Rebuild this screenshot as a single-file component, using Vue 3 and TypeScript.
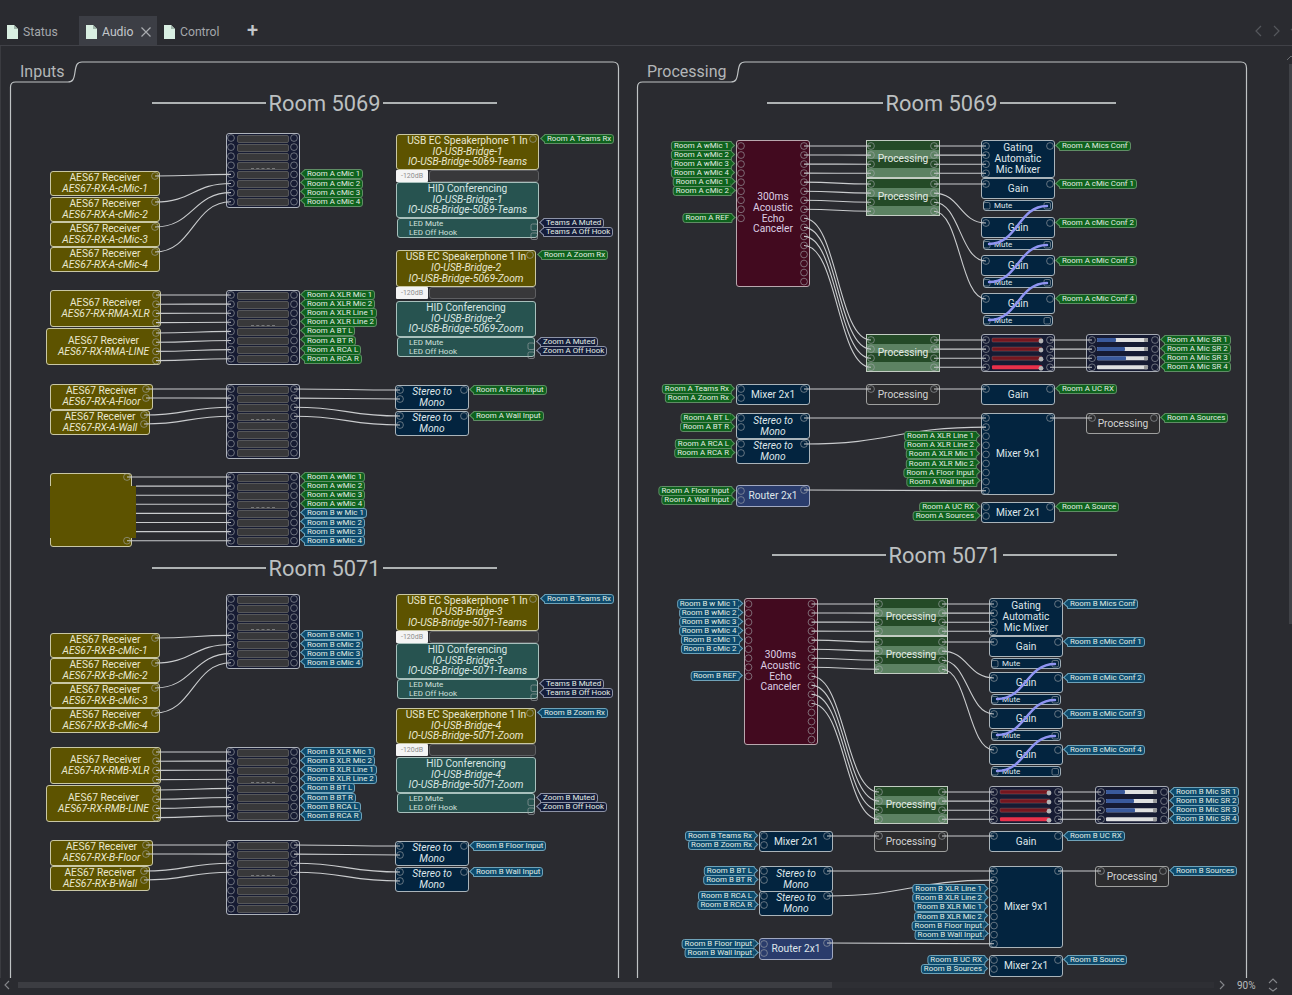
<script setup lang="ts">
type Kind = 'yel' | 'flat' | 'teal' | 'led' | 'navy' | 'aec' | 'rtr' | 'plain' | 'proc' | 'xpt' | 'fader' | 'mute' | 'mval' | 'mbar'
type Color = 'g' | 'b' | 'n'
interface DiagNode { kind: Kind; x: number; y: number; w: number; h: number; lines: { t: string; i: boolean }[] }
interface Lab { x: number; y: number; t: string; out: boolean; c: Color }
interface Wire { d: string; cls: string }
interface Pt { x: number; y: number }
interface Bar { x: number; y: number; w: number; h: number; cls: string }

const nodes: DiagNode[] = []
const labels: Lab[] = []
const wires: Wire[] = []
const ports: Pt[] = []
const squares: Pt[] = []
const bars: Bar[] = []
const knobs: Pt[] = []

const node = (kind: Kind, x: number, y: number, w: number, h: number, lines: string[] = []) => {
  nodes.push({ kind, x, y, w, h, lines: lines.map((l) => ({ t: l.replace(/^~/, ''), i: l.startsWith('~') })) })
}
const port = (x: number, y: number) => { ports.push({ x, y }); return { x, y } }
const wire = (a: Pt, b: Pt, cls = 'wire') => {
  const m = (a.x + b.x) / 2
  wires.push({ d: `M${a.x} ${a.y}C${m} ${a.y} ${m} ${b.y} ${b.x} ${b.y}`, cls })
}
const outLab = (x: number, y: number, t: string, c: Color) => labels.push({ x, y, t, out: true, c })
const inLab = (x: number, y: number, t: string, c: Color) => labels.push({ x, y, t, out: false, c })

function crosspoint(y: number) {
  node('xpt', 226, y, 74, 75)
  const left: Pt[] = []
  const right: Pt[] = []
  for (let i = 0; i < 8; i++) {
    left.push(port(231, y + 5 + 9.1 * i))
    right.push(port(294, y + 5 + 9.1 * i))
  }
  return { left, right }
}
function receiver(x: number, y: number, w: number, h: number, name: string) {
  node('yel', x, y, w, h, ['AES67 Receiver', '~' + name])
}
function usbBlock(y: number, w: number, id: number, room: string, app: string, rx: string, mute: string, hook: string, c: Color, gap: number, h0: number) {
  const bridge = `~IO-USB-Bridge-${id}`
  const full = `~IO-USB-Bridge-${room}-${app}`
  node('yel', 396, y, w, h0, ['USB EC Speakerphone 1 In', bridge, full])
  const m = y + h0
  node('mval', 396, m, 32, 12, ['-120dB'])
  node('mbar', 429, m, w - 33, 12)
  const hid = m + 12 + gap
  node('teal', 396, hid, w, 36, ['HID Conferencing', bridge, full])
  node('led', 397, hid + 36, w - 2, 20, ['LED Mute', 'LED Off Hook'])
  port(396 + w - 6, y + 5)
  outLab(396 + w + 2, y + 5, rx, c)
  squares.push({ x: 396 + w - 8, y: hid + 42 }, { x: 396 + w - 8, y: hid + 51 })
  outLab(396 + w + 1, hid + 41, mute, 'n')
  outLab(396 + w + 1, hid + 50, hook, 'n')
}

function inputsRoom(R: 'A' | 'B', c: Color, num: string, cfg: {
  x1: number; rc: number[]; x2: number; r2: number[]; x3: number; r3: number[]; u: [number, number, number, number]; gaps: [number, number]; hs: [number, number]
}) {
  const rcName = `RX-${R}-cMic`
  const x1 = crosspoint(cfg.x1)
  cfg.rc.forEach((y, i) => {
    receiver(50, y, 110, 25, `AES67-${rcName}-${i + 1}`)
    wire(port(155, y + 5), x1.left[i + 4])
    outLab(301, x1.right[i + 4].y, `Room ${R} cMic ${i + 1}`, c)
  })
  const x2 = crosspoint(cfg.x2)
  const rm = R === 'A' ? 'RMA' : 'RMB'
  receiver(50, cfg.r2[0], 111, 37, `AES67-RX-${rm}-XLR`)
  receiver(46, cfg.r2[1], 115, 37, `AES67-RX-${rm}-LINE`)
  const xlr = ['XLR Mic 1', 'XLR Mic 2', 'XLR Line 1', 'XLR Line 2', 'BT L', 'BT R', 'RCA L', 'RCA R']
  xlr.forEach((t, i) => {
    const top = cfg.r2[i < 4 ? 0 : 1]
    wire(port(156, top + 5 + 9.2 * (i % 4)), x2.left[i])
    outLab(301, x2.right[i].y, `Room ${R} ${t}`, c)
  })
  const x3 = crosspoint(cfg.x3)
  receiver(50, cfg.r3[0], 103, 26, `AES67-RX-${R}-Floor`)
  receiver(50, cfg.r3[1], 100, 25, `AES67-RX-${R}-Wall`)
  for (let i = 0; i < 4; i++) {
    const top = i < 2 ? cfg.r3[0] : cfg.r3[1]
    const px = i < 2 ? 146 : 144
    wire(port(px, top + 5 + 9 * (i % 2)), x3.left[i])
  }
  ;[cfg.r3[0], cfg.r3[1]].forEach((y, s) => {
    node('navy', 395, y + 1, 74, 25, ['~Stereo to', '~Mono'])
    wire(x3.right[s * 2], port(400, y + 6))
    wire(x3.right[s * 2 + 1], port(400, y + 15))
    port(464, y + 6)
    outLab(470, y + 6, `Room ${R} ${s ? 'Wall' : 'Floor'} Input`, c)
  })
  usbBlock(cfg.u[0], 143, R === 'A' ? 1 : 3, num, 'Teams', `Room ${R} Teams Rx`, `Teams ${R} Muted`, `Teams ${R} Off Hook`, c, cfg.gaps[0], cfg.hs[0])
  usbBlock(cfg.u[1], 140, R === 'A' ? 2 : 4, num, 'Zoom', `Room ${R} Zoom Rx`, `Zoom ${R} Muted`, `Zoom ${R} Off Hook`, c, cfg.gaps[1], cfg.hs[1])
}

function processRoom(R: 'A' | 'B', c: Color, cfg: {
  ax: number; ay: number; px: number; mx: number; ox: number; lx: number; p1: number; p2: number; p3: number
  gains: number[]; plain: number; st: number[]; rt: number; m9: number; m9h: number; m2: number; m2h: number
}) {
  const { ax, ay, px, mx, ox, lx } = cfg
  node('aec', ax, ay, 74, 147, ['300ms', 'Acoustic', 'Echo', 'Canceler'])
  const inputs = ['wMic 1', 'wMic 2', 'wMic 3', 'wMic 4', 'cMic 1', 'cMic 2']
  for (let i = 0; i < 9; i++) port(ax + 5, ay + 6 + 9.04 * i)
  inputs.forEach((t, i) => inLab(ax - 1, ay + 6 + 9.04 * i, `Room ${R} ${R === 'B' && i === 0 ? 'w Mic 1' : t}`, c))
  inLab(ax - 1, ay + 6 + 9.04 * 8, `Room ${R} REF`, c)
  const out: Pt[] = []
  for (let i = 0; i < 16; i++) out.push(port(ax + 68, ay + 6 + 9.04 * i))

  const rows = (y: number, x: number) => [0, 1, 2, 3].map((i) => port(x, y + 6 + 9.1 * i))
  const block = (y: number) => {
    node('proc', px, y, 74, 38, ['Processing'])
    return { l: rows(y, px + 5), r: rows(y, px + 68) }
  }
  const p1 = block(cfg.p1)
  const p2 = block(cfg.p2)
  const p3 = block(cfg.p3)
  out.slice(0, 4).forEach((o, i) => wire(o, p1.l[i]))
  out.slice(4, 8).forEach((o, i) => wire(o, p2.l[i]))
  out.slice(8, 12).forEach((o, i) => wire(o, p3.l[i]))

  node('navy', mx, cfg.p1, 74, 38, ['Gating', 'Automatic', 'Mic Mixer'])
  p1.r.forEach((p) => wire(p, port(mx + 5, p.y)))
  port(mx + 69, cfg.p1 + 6)
  outLab(mx + 75, cfg.p1 + 6, `Room ${R} Mics Conf`, c)

  cfg.gains.forEach((g, i) => {
    node('navy', mx, g, 74, 21, ['Gain'])
    node('mute', mx + 2, g + 22, 70, 11, ['Mute'])
    const ip = port(mx + 5, g + 6)
    wire(p2.r[i], ip)
    port(mx + 69, g + 6)
    outLab(mx + 75, g + 6, `Room ${R} cMic Conf ${i + 1}`, c)
    squares.push({ x: mx + 2.5, y: g + 24.5 }, { x: mx + 63, y: g + 24.5 })
  })
  cfg.gains.slice(0, 3).forEach((g, i) => {
    wire({ x: mx + 66, y: g + 28 }, { x: mx + 8, y: cfg.gains[i + 1] + 27 }, 'wire ctl')
  })

  node('fader', mx, cfg.p3, 74, 38)
  node('fader', ox, cfg.p3, 74, 38)
  const fills = [19, 28, 29, 0]
  p3.r.forEach((p, i) => {
    wire(p, port(mx + 5, p.y))
    const fo = port(mx + 69, p.y)
    const si = port(ox + 6, p.y)
    port(ox + 69, p.y)
    wire(fo, si)
    bars.push({ x: mx + 11, y: p.y - 2, w: 50, h: 4, cls: i === 3 ? 'hot' : 'cold' })
    knobs.push({ x: mx + 60, y: p.y + 1 })
    bars.push({ x: ox + 11, y: p.y - 2, w: 51, h: 4, cls: 'track' })
    if (fills[i]) bars.push({ x: ox + 11, y: p.y - 2, w: fills[i], h: 4, cls: 'fill' })
    bars.push({ x: ox + 58, y: p.y - 2, w: 4, h: 4, cls: 'thumb' })
    outLab(ox + 75, p.y, `Room ${R} Mic SR ${i + 1}`, c)
  })

  const y = cfg.plain
  node('navy', lx, y, 74, 21, ['Mixer 2x1'])
  inLab(lx - 1, y + 5, `Room ${R} Teams Rx`, c)
  inLab(lx - 1, y + 14, `Room ${R} Zoom Rx`, c)
  port(lx + 5, y + 5)
  port(lx + 5, y + 14)
  node('plain', px, y, 74, 21, ['Processing'])
  node('navy', mx, y, 74, 21, ['Gain'])
  wire(port(lx + 68, y + 5), port(px + 5, y + 5))
  wire(port(px + 68, y + 5), port(mx + 5, y + 5))
  port(mx + 69, y + 5)
  outLab(mx + 75, y + 5, `Room ${R} UC RX`, c)

  const [s1, s2] = cfg.st
  node('navy', lx, s1, 74, 26, ['~Stereo to', '~Mono'])
  node('navy', lx, s2, 74, 25, ['~Stereo to', '~Mono'])
  ;[['BT L', s1 + 5], ['BT R', s1 + 14], ['RCA L', s2 + 5], ['RCA R', s2 + 14]].forEach(([t, ly]) => {
    inLab(lx - 1, ly as number, `Room ${R} ${t}`, c)
    port(lx + 5, ly as number)
  })
  node('rtr', lx, cfg.rt, 74, 22, ['Router 2x1'])
  inLab(lx - 1, cfg.rt + 6, `Room ${R} Floor Input`, c)
  inLab(lx - 1, cfg.rt + 15, `Room ${R} Wall Input`, c)
  port(lx + 5, cfg.rt + 6)
  port(lx + 5, cfg.rt + 15)

  node('navy', mx, cfg.m9, 74, cfg.m9h, ['Mixer 9x1'])
  const mix: Pt[] = []
  for (let i = 0; i < 9; i++) mix.push(port(mx + 5, cfg.m9 + 5 + 9.1 * i))
  wire(port(lx + 68, s1 + 5), mix[0])
  wire(port(lx + 68, s2 + 5), mix[1])
  wire(port(lx + 68, cfg.rt + 5), mix[8])
  ;['XLR Line 1', 'XLR Line 2', 'XLR Mic 1', 'XLR Mic 2', 'Floor Input', 'Wall Input'].forEach((t, i) => {
    inLab(mx - 1, mix[i + 2].y, `Room ${R} ${t}`, c)
  })
  node('plain', ox, cfg.m9, 74, 21, ['Processing'])
  wire(port(mx + 69, cfg.m9 + 5), port(ox + 6, cfg.m9 + 5))
  port(ox + 68, cfg.m9 + 5)
  outLab(ox + 75, cfg.m9 + 5, `Room ${R} Sources`, c)

  node('navy', mx, cfg.m2, 74, cfg.m2h, ['Mixer 2x1'])
  inLab(mx - 1, cfg.m2 + 5, `Room ${R} UC RX`, c)
  inLab(mx - 1, cfg.m2 + 14, `Room ${R} Sources`, c)
  port(mx + 5, cfg.m2 + 5)
  port(mx + 5, cfg.m2 + 14)
  port(mx + 69, cfg.m2 + 5)
  outLab(mx + 75, cfg.m2 + 5, `Room ${R} Source`, c)
}

inputsRoom('A', 'g', '5069', {
  x1: 133, rc: [171, 197, 222, 247], x2: 290, r2: [290, 328], x3: 384, r3: [384, 410],
  u: [134, 250, 0, 0], gaps: [0, 2], hs: [36, 37],
})
inputsRoom('B', 'b', '5071', {
  x1: 594, rc: [633, 658, 683, 708], x2: 747, r2: [747, 785], x3: 840, r3: [840, 866],
  u: [594, 708, 0, 0], gaps: [0, 1], hs: [37, 36],
})

// Shared crosspoint fed by the wireless mic receiver
const xw = crosspoint(472)
node('yel', 50, 473, 82, 74)
xw.left.forEach((p, i) => wire({ x: i === 0 || i === 7 ? 127 : 136, y: p.y }, p))
port(127, xw.left[0].y)
port(127, xw.left[7].y)
node('flat', 50, 486, 86, 52)
;['A wMic 1', 'A wMic 2', 'A wMic 3', 'A wMic 4', 'B w Mic 1', 'B wMic 2', 'B wMic 3', 'B wMic 4'].forEach((t, i) => {
  outLab(301, xw.right[i].y, `Room ${t}`, i < 4 ? 'g' : 'b')
})

processRoom('A', 'g', {
  ax: 736, ay: 140, px: 866, mx: 981, ox: 1086, lx: 736, p1: 140, p2: 178, p3: 334,
  gains: [178, 217, 255, 293], plain: 384, st: [413, 439], rt: 485, m9: 413, m9h: 82, m2: 502, m2h: 21,
})
processRoom('B', 'b', {
  ax: 743.5, ay: 598, px: 874, mx: 989, ox: 1095, lx: 759, p1: 598, p2: 636, p3: 786,
  gains: [636, 672, 708, 744], plain: 831, st: [866, 891], rt: 938, m9: 866, m9h: 82, m2: 955, m2h: 22,
})

const headings = [
  { x: 152, y: 103, w: 345, t: 'Room 5069' },
  { x: 152, y: 568, w: 345, t: 'Room 5071' },
  { x: 767, y: 103, w: 349, t: 'Room 5069' },
  { x: 772, y: 555, w: 345, t: 'Room 5071' },
]
const tabs = [
  { t: 'Status', w: 79, active: false },
  { t: 'Audio', w: 78, active: true },
  { t: 'Control', w: 81, active: false },
]
const frames = [
  { t: 'Inputs', x: 20, d: 'M10.5 978V87Q10.5 82 15.5 82H68C73 82 74 79 75 72C76 65 77 62 82 62H613Q618.5 62 618.5 68V978' },
  { t: 'Processing', x: 647, d: 'M637.5 978V87Q637.5 82 642.5 82H731C736 82 737 79 738 72C739 65 740 62 745 62H1241Q1246.5 62 1246.5 68V978' },
]
</script>

<template>
  <div class="app">
    <header class="tabbar">
      <div v-for="tab in tabs" :key="tab.t" class="tab" :class="{ active: tab.active }" :style="{ width: tab.w + 'px' }">
        <svg class="doc" viewBox="0 0 11 14" width="11" height="14"><path d="M0 0H7L11 4V14H0Z" fill="#d9efe2" /><path d="M7 0V4H11Z" fill="#9db3a7" /></svg>
        <span>{{ tab.t }}</span>
        <svg v-if="tab.active" class="close" viewBox="0 0 10 10" width="10" height="10"><path d="M.5.5l9 9M9.5.5l-9 9" /></svg>
      </div>
      <span class="plus">+</span>
      <svg class="nav" viewBox="0 0 42 12" width="42" height="12"><path d="M6 1L1 6l5 5M19 1l5 5-5 5" /><path d="M36 4l3 3 3-3" /></svg>
    </header>

    <main class="canvas">
      <div class="diagram">
        <div v-for="f in frames" :key="f.t" class="frame-title" :style="{ left: f.x + 'px' }">{{ f.t }}</div>
        <div v-for="h in headings" :key="h.x + '-' + h.y" class="heading" :style="{ left: h.x + 'px', top: h.y - 15 + 'px', width: h.w + 'px' }">
          <i></i><span>{{ h.t }}</span><i></i>
        </div>
        <div
          v-for="(n, idx) in nodes"
          :key="idx"
          class="node"
          :class="n.kind"
          :style="{ left: n.x + 'px', top: n.y + 'px', width: n.w + 'px', height: n.h + 'px' }"
        >
          <template v-if="n.kind === 'xpt'"><b v-for="r in 8" :key="r" class="xrow"></b></template>
          <span v-for="l in n.lines" :key="l.t" :class="{ it: l.i }">{{ l.t }}</span>
        </div>

        <svg class="overlay" width="1292" height="995" viewBox="0 0 1292 995">
          <path v-for="f in frames" :key="f.t" class="frame" :d="f.d" />
          <rect v-for="(b, i) in bars" :key="'b' + i" :class="b.cls" :x="b.x" :y="b.y" :width="b.w" :height="b.h" rx="1" />
          <circle v-for="(k, i) in knobs" :key="'k' + i" class="knob" :cx="k.x" :cy="k.y" r="2.4" />
          <circle v-for="(p, i) in ports" :key="'p' + i" class="port" :cx="p.x" :cy="p.y" r="3.4" />
          <rect v-for="(s, i) in squares" :key="'s' + i" class="port" :x="s.x" :y="s.y" width="6.5" height="6.5" rx="1.5" />
          <path v-for="(w, i) in wires" :key="'w' + i" :class="w.cls" :d="w.d" />
        </svg>

        <div
          v-for="(l, i) in labels"
          :key="'l' + i"
          class="lab"
          :class="[l.c, l.out ? 'out' : 'in']"
          :style="{ left: (l.out ? l.x + 3 : l.x - 3) + 'px', top: l.y - 5 + 'px' }"
        >{{ l.t }}</div>
      </div>
      <div class="vscroll"><svg viewBox="0 0 10 6" width="10" height="6"><path d="M1 5l4-4 4 4" /></svg><b></b></div>
    </main>

    <footer class="status">
      <svg viewBox="0 0 6 10" width="6" height="10"><path d="M5 1L1 5l4 4" /></svg>
      <div class="hbar"><b></b></div>
      <svg viewBox="0 0 6 10" width="6" height="10"><path d="M1 1l4 4-4 4" /></svg>
      <span class="zoom">90%</span>
      <svg class="updown" viewBox="0 0 10 14" width="10" height="14"><path d="M1 5l4-4 4 4M1 10l4 3 4-3" /></svg>
    </footer>
  </div>
</template>

<style>
html, body { margin: 0; background: #2a2b30; }
</style>

<style scoped>
.app {
  width: 1292px;
  height: 995px;
  display: flex;
  flex-direction: column;
  overflow: hidden;
  background: #2a2b30;
  font-family: Roboto, "Noto Sans", sans-serif;
}
.tabbar {
  height: 46px;
  box-sizing: border-box;
  flex: none;
  padding-top: 16px;
  display: flex;
  align-items: stretch;
  border-bottom: 1px solid #404147;
  font-size: 12.2px;
  color: #a4a7ab;
  position: relative;
}
.tab { display: flex; align-items: center; gap: 5px; padding: 2px 0 0 7px; box-sizing: border-box; }
.tab.active { background: #3c3e45; color: #c4c7cb; }
.doc { flex: none; }
.close { margin-left: 3px; fill: none; stroke: #a9acb0; stroke-width: 1.2; }
.plus { margin-left: 9px; font-size: 20px; font-weight: 500; line-height: 29px; color: #c4c7cb; }
.nav { position: absolute; right: -5px; top: 25px; overflow: visible; fill: none; stroke: #55575c; stroke-width: 1.2; }

.canvas { flex: none; height: 932px; position: relative; overflow: hidden; border-left: 1px solid #3a3b40; box-sizing: border-box; }
.diagram { position: absolute; left: -1px; top: -46px; width: 1292px; height: 995px; }
.overlay { position: absolute; left: 0; top: 0; pointer-events: none; fill: none; }

.frame { stroke: #bfc3c4; stroke-width: 1.2; fill: none; }
.frame-title { position: absolute; top: 62px; font-size: 16px; line-height: 20px; color: #b3b6b8; }
.heading {
  position: absolute;
  height: 30px;
  display: flex;
  align-items: center;
  gap: 3px;
  font-size: 21.8px;
  color: #bcc0c1;
}
.heading i { flex: 1; height: 1.6px; background: #aeb2b3; }

.node {
  position: absolute;
  box-sizing: border-box;
  display: flex;
  flex-direction: column;
  align-items: center;
  justify-content: center;
  border: 1px solid #aab4ba;
  border-radius: 3px;
  font-size: 10.2px;
  line-height: 10.9px;
  text-align: center;
  white-space: nowrap;
  color: #dfe6ea;
}
.node .it { font-style: italic; }
.yel { background: #5d5300; border-color: #c9c7a4; color: #e9e7cf; }
.flat { background: #5d5300; border: none; border-radius: 0; }
.teal { background: #275350; border-color: #a8c0bc; color: #d8e6e3; }
.led {
  background: #275350;
  border-color: #a8c0bc;
  align-items: flex-start;
  padding-left: 11px;
  font-size: 8px;
  line-height: 9px;
  color: #cfe0dc;
}
.navy { background: #03243f; padding-top: 1px; }
.aec { background: #420a1f; border-color: #b9a8ae; color: #ddcfe4; }
.rtr { background: #2a3c6c; border-color: #a0a8c0; padding-top: 1px; }
.plain { background: #2c2c2e; border-color: #9fa09f; color: #d2d3d3; padding-top: 1px; }
.proc {
  border-radius: 0;
  border-color: #c3cdc3;
  color: #e4ebe5;
  background: linear-gradient(#244a27 25%, #5c8262 25% 50%, #244a27 50% 75%, #5c8262 75%);
}
.xpt {
  background: #161b33;
  border-color: #aeb3bb;
  padding: 1px 10px;
  justify-content: space-between;
  align-items: stretch;
}
.xpt::after {
  content: "";
  position: absolute;
  left: 24px;
  right: 24px;
  top: 34px;
  border-top: 1px dashed #77787a;
}
.xrow { display: block; height: 8px; background: #38383a; border: 1px solid #56575a; border-radius: 2px; box-sizing: border-box; }
.fader { background: #161b33; border-color: #a6abb3; }
.mute {
  background: #03243f;
  border-color: #9fadb6;
  align-items: flex-start;
  padding-left: 10px;
  font-size: 8px;
  line-height: 9px;
}
.mval { background: #f4f4f4; border: none; border-radius: 1px; color: #8d8d8d; font-size: 7px; }
.mbar { background: #38383a; border-color: #5e5f62; }

.wire { fill: none; stroke: #c9cbcd; stroke-width: 1.1; }
.ctl { stroke: #8f94f2; stroke-width: 2.4; stroke-linecap: round; }
.port { fill: none; stroke: #a3a8ac; stroke-opacity: .6; stroke-width: 1; }
.cold { fill: #75161f; stroke: #8a7a7a; stroke-width: .4; }
.hot { fill: #e8304a; }
.track { fill: #dfe0e0; }
.fill { fill: #3a5a9c; }
.thumb { fill: #9a9b9c; }
.knob { fill: #b4b5b6; }

.lab {
  position: absolute;
  box-sizing: border-box;
  height: 10px;
  padding: 0 2px;
  border: 1px solid #5f8d65;
  font-size: 7.9px;
  line-height: 8px;
  white-space: nowrap;
  color: #e3ece2;
}
.lab.out { border-radius: 0 3px 3px 0; }
.lab.in { transform: translateX(-100%); border-radius: 3px 0 0 3px; }
.lab::after {
  content: "";
  position: absolute;
  top: .7px;
  width: 5.4px;
  height: 5.4px;
  box-sizing: border-box;
  background: inherit;
  border: inherit;
  border-radius: 0;
  transform: rotate(45deg);
}
.lab.out::after { left: -3.6px; border-top: none; border-right: none; }
.lab.in::after { right: -3.6px; border-bottom: none; border-left: none; }
.lab.g { background: #0e621d; }
.lab.b { background: #0d4a6c; border-color: #6fa2b8; }
.lab.n { background: #151d3a; border-color: #8d93a6; }

.vscroll { position: absolute; right: 0; top: 9px; width: 6px; display: flex; flex-direction: column; gap: 3px; fill: none; stroke: #6a6c70; }
.vscroll b { display: block; margin-left: 3px; height: 560px; background: #404247; }

.status {
  flex: 1;
  display: flex;
  align-items: center;
  padding: 0 14px 3px 4px;
  fill: none;
  stroke: #85878b;
  stroke-width: 1.1;
  box-sizing: border-box;
  border-bottom: 2px solid #3a3b40;
}
.hbar { width: 1196px; margin: 0 5px 0 8px; height: 6px; background: #2e2f34; }
.hbar b { display: block; width: 814px; height: 6px; background: #3c3d42; }
.zoom { margin-left: 12px; font-size: 10px; stroke: none; color: #b9bbbd; }
.updown { margin-left: 12px; }
</style>
